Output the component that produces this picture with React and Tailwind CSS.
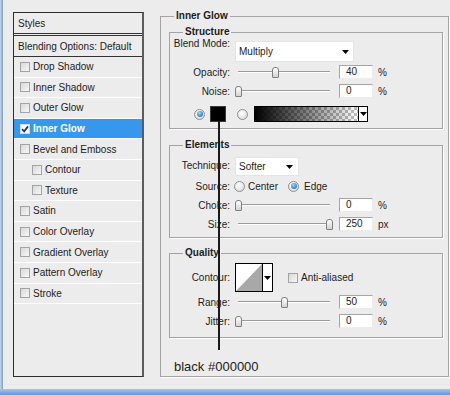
import clsx from "clsx";

const styles = [
  { name: "Drop Shadow" },
  { name: "Inner Shadow" },
  { name: "Outer Glow" },
  { name: "Inner Glow", active: true },
  { name: "Bevel and Emboss" },
  { name: "Contour", indent: true },
  { name: "Texture", indent: true },
  { name: "Satin" },
  { name: "Color Overlay" },
  { name: "Gradient Overlay" },
  { name: "Pattern Overlay" },
  { name: "Stroke" },
];

function Caret() {
  return (
    <svg width="7" height="4" viewBox="0 0 7 4" className="shrink-0">
      <path d="M0 0H7L3.5 4Z" fill="#000" />
    </svg>
  );
}

function Check({ checked }) {
  if (checked) {
    return (
      <div className="w-[10px] h-[10px] shrink-0 bg-white border border-[#c9d9ee] flex items-center justify-center">
        <svg width="8" height="8" viewBox="0 0 8 8">
          <path d="M1 4.2 L3.2 6.4 L7 1.4" stroke="#1b3a73" strokeWidth="1.8" fill="none" />
        </svg>
      </div>
    );
  }
  return <div className="w-[10px] h-[10px] shrink-0 border border-[#a3a3a3] bg-[linear-gradient(135deg,#d8d8d8,#f7f7f7)]" />;
}

function Radio({ checked }) {
  return (
    <div className="w-[11px] h-[11px] shrink-0 rounded-full border border-[#8e8e8e] bg-[radial-gradient(circle_at_40%_35%,#ffffff,#d4d4d4)] flex items-center justify-center">
      {checked && <div className="w-[6px] h-[6px] rounded-full bg-[radial-gradient(circle_at_40%_35%,#9fd6ff,#0d5c9e)]" />}
    </div>
  );
}

function Field({ value }) {
  return (
    <div className="w-[34px] h-[14px] bg-white border border-t-[#a5a5a5] border-l-[#a5a5a5] border-b-[#ececec] border-r-[#ececec] pl-[6px] leading-[12px]">
      {value}
    </div>
  );
}

function Slider({ value }) {
  return (
    <div className="relative w-[98px] h-[12px] flex items-center">
      <div className="mx-[3px] flex-1 h-[2px] border-t border-[#9a9a9a] border-b border-b-white" />
      <div
        className="absolute top-[0.5px] w-[7px] h-[11px] rounded-t-[3px] rounded-b-[1px] border border-[#7f7f7f] bg-[linear-gradient(#ffffff,#d3d3d3)]"
        style={{ left: Math.round(value * 91) }}
      />
    </div>
  );
}

function SliderRow({ label, value, pos, unit }) {
  return (
    <div className="mt-[1px] h-[18px] flex items-center">
      <div className="w-[60px] text-right">{label}</div>
      <div className="ml-[5px]">
        <Slider value={pos} />
      </div>
      <div className="ml-[6px]">
        <Field value={value} />
      </div>
      <div className="ml-[5px]">{unit}</div>
    </div>
  );
}

function Group({ title, className, children }) {
  return (
    <fieldset className={clsx("border border-[#a3a3a3] shadow-[1px_1px_0_#fff]", className)}>
      <legend className="ml-[13px] px-[2px] font-bold leading-[12px]">{title}</legend>
      {children}
    </fieldset>
  );
}

export default function App() {
  return (
    <div className="relative w-[450px] h-[395px] bg-[#ececec] flex flex-col font-['Liberation_Sans',Arial,sans-serif] text-[10px] text-[#1c1c1c]">
      <div className="flex-1 flex">
        <div className="w-[3px] bg-[linear-gradient(to_right,#c9d7e8,#7d9dc7)]" />
        <div className="pl-[10px] pt-[10px] flex items-start">
          {/* styles list */}
          <div className="mt-[2px] w-[131px] h-[365px] border border-[#2e2e2e] border-r-2 border-r-[#5c5c5c] flex flex-col">
            <div className="h-[23px] pl-[4px] flex items-center border-b-[3px] border-double border-[#333]">Styles</div>
            <div className="h-[21px] pl-[4px] flex items-center border-b border-[#333]">Blending Options: Default</div>
            {styles.map((s) => (
              <div
                key={s.name}
                className={clsx(
                  "h-[20.6px] border-b border-white flex items-center",
                  s.indent ? "pl-[18px]" : "pl-[6px]",
                  s.active && "bg-[#3797ec] text-white font-bold"
                )}
              >
                <Check checked={s.active} />
                <span className="ml-[3px]">{s.name}</span>
              </div>
            ))}
          </div>

          {/* settings */}
          <Group title="Inner Glow" className="ml-[16px] w-[289px] h-[367px]">
            <Group title="Structure" className="mt-[4px] ml-[8px] w-[274px] h-[103px]">
              <div className="flex items-start">
                <div className="w-[60px] text-right leading-[12px]">Blend Mode:</div>
                <div className="ml-[5px] mt-[3px] w-[119px] h-[21px] bg-white border border-[#e4e4e4] pl-[3px] pr-[4px] flex items-center justify-between">
                  <span>Multiply</span>
                  <Caret />
                </div>
              </div>
              <SliderRow label="Opacity:" value="40" pos={0.41} unit="%" />
              <SliderRow label="Noise:" value="0" pos={0} unit="%" />
              <div className="mt-[5px] h-[18px] flex items-center">
                <div className="ml-[24px]">
                  <Radio checked />
                </div>
                <div className="ml-[5px] w-[16px] h-[16px] bg-black border border-[#3a3a3a]" />
                <div className="ml-[11px]">
                  <Radio />
                </div>
                <div className="ml-[6px] w-[114px] h-[16px] border border-black flex">
                  <div className="flex-1 bg-[image:linear-gradient(to_right,#000,rgba(0,0,0,0.15)_85%,rgba(0,0,0,0)),repeating-conic-gradient(#bdbdbd_0_25%,#ffffff_0_50%)] bg-size-[100%_100%,6px_6px]" />
                  <div className="w-[9px] border-l border-black bg-white flex items-center justify-center">
                    <Caret />
                  </div>
                </div>
              </div>
            </Group>

            <Group title="Elements" className="mt-[10px] ml-[8px] w-[274px] h-[99px]">
              <div className="mt-[6px] flex items-start">
                <div className="mt-[3px] w-[60px] text-right leading-[12px]">Technique:</div>
                <div className="ml-[5px] w-[64px] h-[19px] bg-white border border-[#e4e4e4] pl-[3px] pr-[5px] flex items-center justify-between">
                  <span>Softer</span>
                  <Caret />
                </div>
              </div>
              <div className="mt-[1px] h-[18px] flex items-center">
                <div className="w-[60px] text-right">Source:</div>
                <div className="ml-[4px]">
                  <Radio />
                </div>
                <span className="ml-[3px]">Center</span>
                <div className="ml-[10px]">
                  <Radio checked />
                </div>
                <span className="ml-[5px]">Edge</span>
              </div>
              <SliderRow label="Choke:" value="0" pos={0} unit="%" />
              <SliderRow label="Size:" value="250" pos={1} unit="px" />
            </Group>

            <Group title="Quality" className="mt-[9px] ml-[8px] w-[274px] h-[91px]">
              <div className="mt-[4px] h-[29px] flex items-center">
                <div className="w-[60px] text-right">Contour:</div>
                <div className="ml-[5px] w-[38px] h-[29px] border border-black flex">
                  <svg className="flex-1 bg-white" viewBox="0 0 27 27" preserveAspectRatio="none">
                    <path d="M0 27 L27 0 L27 27 Z" fill="#a8a8a8" />
                  </svg>
                  <div className="w-[10px] border-l border-black bg-white flex items-center justify-center">
                    <Caret />
                  </div>
                </div>
                <div className="ml-[15px]">
                  <Check />
                </div>
                <span className="ml-[3px]">Anti-aliased</span>
              </div>
              <div className="mt-[1px]" />
              <SliderRow label="Range:" value="50" pos={0.5} unit="%" />
              <SliderRow label="Jitter:" value="0" pos={0} unit="%" />
            </Group>

            <div className="mt-[21px] ml-[13px] text-[13px] leading-[15px] text-[#222]">black #000000</div>
          </Group>
        </div>
      </div>
      <div className="h-[6px] bg-[linear-gradient(#a9c6ec,#5f93d6)]" />

      {/* annotation pointer */}
      <div className="absolute left-[218px] top-[121px] w-[2px] h-[229px] bg-[#1a1a1a]" />
    </div>
  );
}
